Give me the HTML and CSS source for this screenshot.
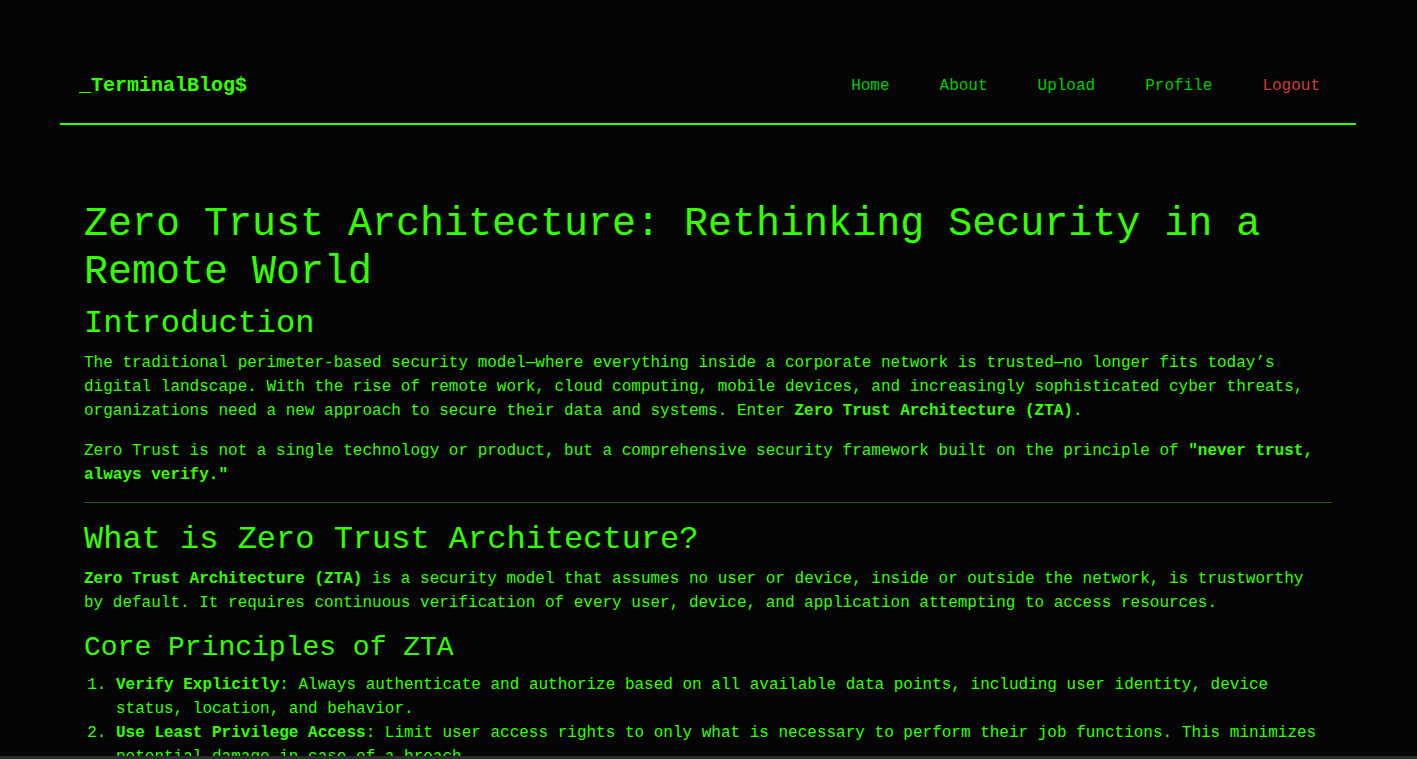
FILE: index.html
```html
<!DOCTYPE html>
<html lang="en">
<head>
<meta charset="utf-8">
<title>_TerminalBlog$</title>
<link rel="stylesheet" href="styles.css">
</head>
<body>
<div class="wrap">
  <header class="site-header">
    <a class="logo" href="#">_TerminalBlog$</a>
    <nav class="nav">
      <a href="#">Home</a>
      <a href="#">About</a>
      <a href="#">Upload</a>
      <a href="#">Profile</a>
      <a href="#" class="logout">Logout</a>
    </nav>
  </header>
  <main class="post">
    <h1>Zero Trust Architecture: Rethinking Security in a Remote World</h1>
    <h2>Introduction</h2>
    <p>The traditional perimeter-based security model—where everything inside a corporate network is trusted—no longer fits today’s digital landscape. With the rise of remote work, cloud computing, mobile devices, and increasingly sophisticated cyber threats, organizations need a new approach to secure their data and systems. Enter <strong>Zero Trust Architecture (ZTA)</strong>.</p>
    <p>Zero Trust is not a single technology or product, but a comprehensive security framework built on the principle of <strong>"never trust, always verify."</strong></p>
    <hr>
    <h2>What is Zero Trust Architecture?</h2>
    <p><strong>Zero Trust Architecture (ZTA)</strong> is a security model that assumes no user or device, inside or outside the network, is trustworthy by default. It requires continuous verification of every user, device, and application attempting to access resources.</p>
    <h3>Core Principles of ZTA</h3>
    <ol>
      <li><strong>Verify Explicitly</strong>: Always authenticate and authorize based on all available data points, including user identity, device status, location, and behavior.</li>
      <li><strong>Use Least Privilege Access</strong>: Limit user access rights to only what is necessary to perform their job functions. This minimizes potential damage in case of a breach.</li>
      <li><strong>Assume Breach</strong>: Design systems as if attackers are already inside the network. Segment access and monitor continuously to limit lateral movement.</li>
    </ol>
  </main>
</div>
<div class="bottom-bar"></div>
</body>
</html>
```
FILE: styles.css
```css
html, body {
  margin: 0;
  padding: 0;
  background: #050505;
}
body {
  color: #33ff00;
  font-family: "Liberation Mono", "DejaVu Sans Mono", monospace;
  font-size: 16px;
  line-height: 1.5;
}
.wrap {
  margin: 0 61px 0 60px;
  padding-top: 49px;
}
.site-header {
  display: flex;
  align-items: center;
  justify-content: space-between;
  padding: 25px 36px 25px 19px;
  border-bottom: 2px solid #33ff00;
}
.logo {
  font-size: 20px;
  line-height: 24px;
  font-weight: bold;
  color: #33ff00;
  text-decoration: none;
}
.nav {
  display: flex;
  gap: 50px;
  font-size: 16px;
  line-height: 24px;
}
.nav a {
  color: #00cc00;
  text-decoration: none;
}
.nav a.logout {
  color: #d23a3a;
}
.post {
  padding: 76px 24px 40px;
}
.post h1 {
  font-size: 40px;
  line-height: 48px;
  font-weight: 500;
  margin: 0 0 8px;
}
.post h2 {
  font-size: 32px;
  line-height: 38px;
  font-weight: 500;
  margin: 0 0 8px;
}
.post h3 {
  font-size: 28px;
  line-height: 34px;
  font-weight: 500;
  margin: 0 0 8px;
}
.post p {
  margin: 0 0 16px;
}
.post strong {
  font-weight: bold;
}
.post hr {
  border: 0;
  border-top: 1px solid #1f5a10;
  margin: -1px 0 18px;
}
.post ol {
  margin: 0;
  padding-left: 32px;
}
.bottom-bar {
  position: fixed;
  left: 0;
  right: 0;
  bottom: 0;
  height: 3px;
  background: #2b2b2b;
}
```
